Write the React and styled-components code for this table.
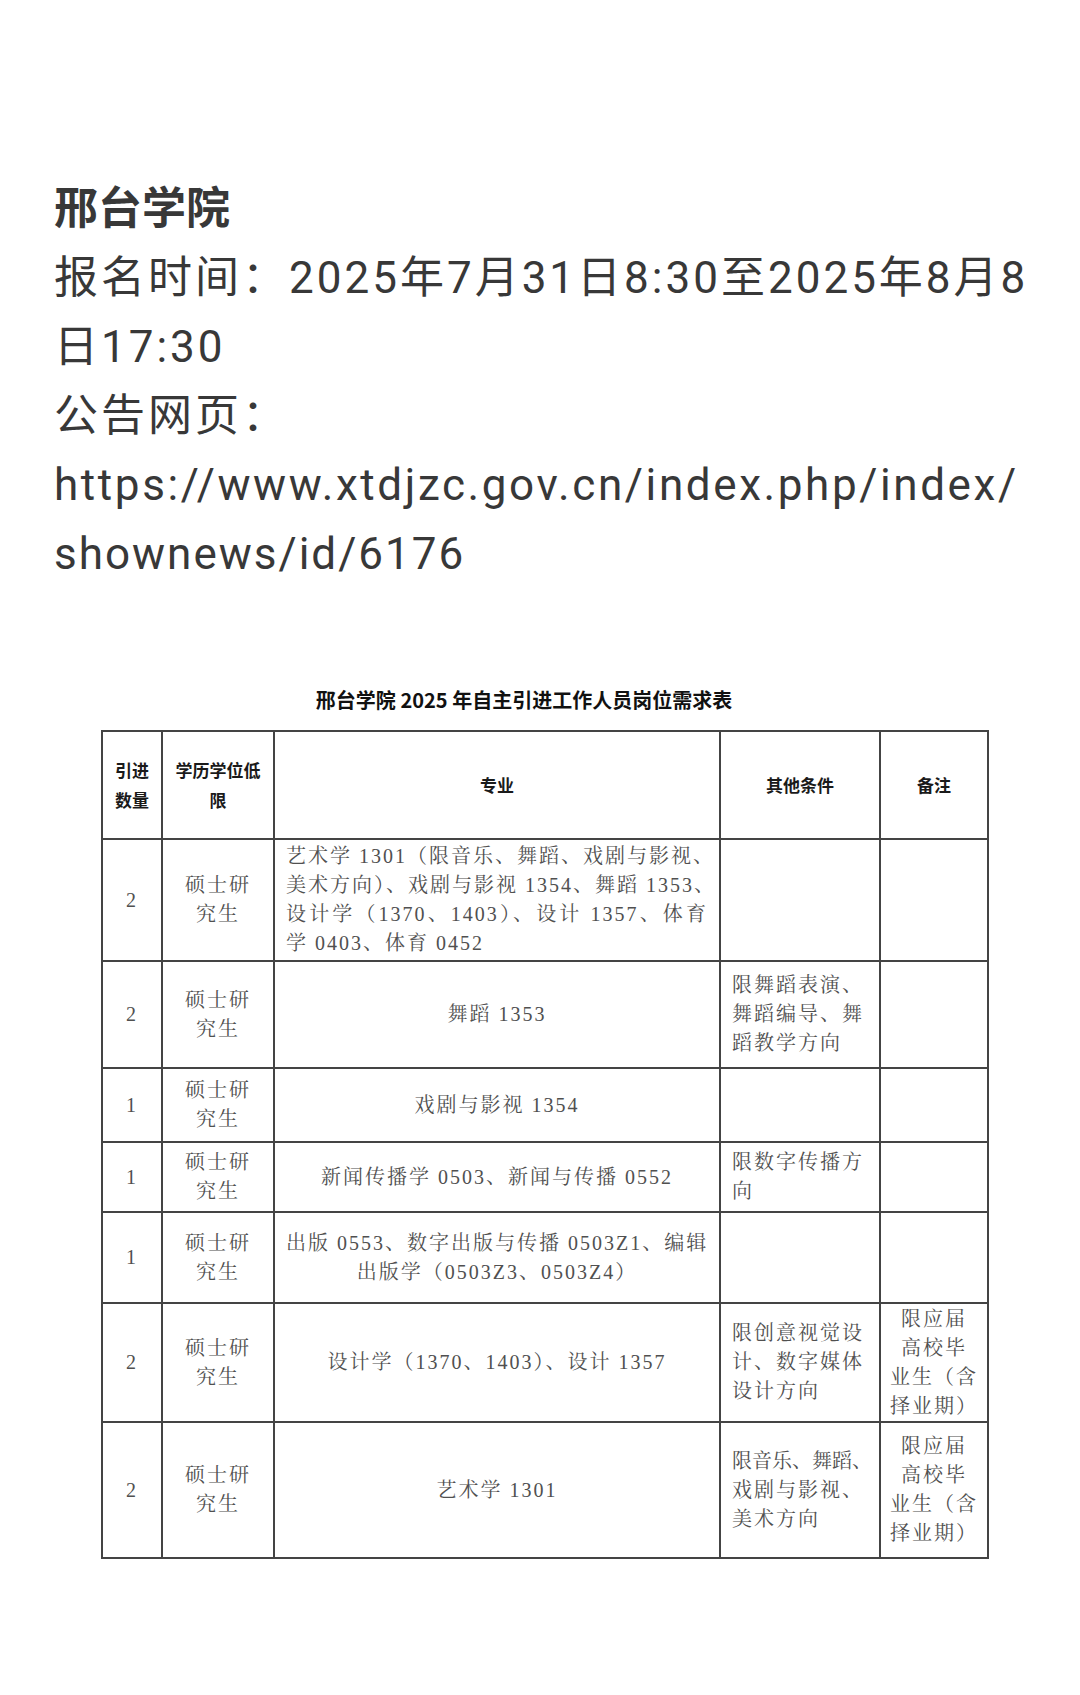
import styled, { createGlobalStyle } from 'styled-components';

// Rows of the document table
const rows = [
  {
    h: 122,
    count: '2',
    major: [
      { t: '艺术学 1301（限音乐、舞蹈、戏剧与影视、', full: true },
      { t: '美术方向）、戏剧与影视 1354、舞蹈 1353、', full: true },
      { t: '设计学（1370、1403）、设计 1357、体育', full: true },
      { t: '学 0403、体育 0452' },
    ],
    majorAlign: 'left',
    other: [],
    note: [],
  },
  {
    h: 107,
    count: '2',
    major: [{ t: '舞蹈 1353' }],
    other: [{ t: '限舞蹈表演、' }, { t: '舞蹈编导、舞' }, { t: '蹈教学方向' }],
    note: [],
  },
  {
    h: 74,
    count: '1',
    major: [{ t: '戏剧与影视 1354' }],
    other: [],
    note: [],
  },
  {
    h: 70,
    count: '1',
    major: [{ t: '新闻传播学 0503、新闻与传播 0552' }],
    other: [{ t: '限数字传播方' }, { t: '向' }],
    note: [],
  },
  {
    h: 91,
    count: '1',
    major: [{ t: '出版 0553、数字出版与传播 0503Z1、编辑' }, { t: '出版学（0503Z3、0503Z4）' }],
    other: [],
    note: [],
  },
  {
    h: 119,
    count: '2',
    major: [{ t: '设计学（1370、1403）、设计 1357' }],
    other: [{ t: '限创意视觉设' }, { t: '计、数字媒体' }, { t: '设计方向' }],
    note: [{ t: '限应届' }, { t: '高校毕' }, { t: '业生（含' }, { t: '择业期）' }],
  },
  {
    h: 136,
    count: '2',
    major: [{ t: '艺术学 1301' }],
    other: [{ t: '限音乐、舞蹈、', tight: true }, { t: '戏剧与影视、' }, { t: '美术方向' }],
    note: [{ t: '限应届' }, { t: '高校毕' }, { t: '业生（含' }, { t: '择业期）' }],
  },
];

function Lines({ items }) {
  return items.map((item, i) => (
    <Line key={i} $full={item.full} $tight={item.tight}>
      {item.t}
    </Line>
  ));
}

function App() {
  return (
    <>
      <GlobalStyle />
      <Page>
        <Intro>
          <Heading>邢台学院</Heading>
          <Para>
            报名时间：2025年7月31日8:30至2025年8月8
            <br />
            日17:30
          </Para>
          <Para>公告网页：</Para>
          <Para $ls={2.6}>
            https://www.xtdjzc.gov.cn/index.php/index/
            <br />
            <Tail>shownews/id/6176</Tail>
          </Para>
        </Intro>

        <Figure>
          <DocTitle>邢台学院 2025 年自主引进工作人员岗位需求表</DocTitle>
          <Table>
            <colgroup>
              <col style={{ width: 60 }} />
              <col style={{ width: 112 }} />
              <col style={{ width: 446 }} />
              <col style={{ width: 160 }} />
              <col style={{ width: 108 }} />
            </colgroup>
            <thead>
              <Row $h={108}>
                <Th>
                  引进
                  <br />
                  数量
                </Th>
                <Th>
                  学历学位低
                  <br />
                  限
                </Th>
                <Th>专业</Th>
                <Th>其他条件</Th>
                <Th>备注</Th>
              </Row>
            </thead>
            <tbody>
              {rows.map((row, i) => (
                <Row key={i} $h={row.h}>
                  <Td $align="center">{row.count}</Td>
                  <Td $align="center">
                    <Line>硕士研</Line>
                    <Line>究生</Line>
                  </Td>
                  <Td $align={row.majorAlign || 'center'}>
                    <Lines items={row.major} />
                  </Td>
                  <Td $align="left">
                    <Lines items={row.other} />
                  </Td>
                  <Td $align="center" $pad={4}>
                    <Lines items={row.note} />
                  </Td>
                </Row>
              ))}
            </tbody>
          </Table>
        </Figure>
      </Page>
    </>
  );
}

const GlobalStyle = createGlobalStyle`
  * {
    margin: 0;
    padding: 0;
    box-sizing: border-box;
  }

  body {
    background-color: #ffffff;
    font-family: 'Noto Sans CJK SC', sans-serif;
  }
`;

const Page = styled.div`
  width: 1080px;
  min-height: 1695px;
  padding-top: 175px;
  background-color: #ffffff;
`;

const Intro = styled.div`
  padding: 0 54px;
  font-family: Roboto, 'Noto Sans CJK SC', sans-serif;
  font-size: 44px;
  line-height: 69px;
  letter-spacing: 3px;
  color: #383838;
  white-space: nowrap;
`;

const Heading = styled.div`
  font-weight: 700;
  letter-spacing: 0;
`;

const Para = styled.div`
  ${({ $ls }) => $ls != null && `letter-spacing: ${$ls}px;`}
`;

const Tail = styled.span`
  letter-spacing: 2px;
`;

const Figure = styled.div`
  margin-top: 96px;
  padding-left: 101px;
`;

const DocTitle = styled.div`
  width: 886px;
  padding-right: 40px;
  margin-bottom: 15px;
  text-align: center;
  font-family: 'Noto Sans CJK SC', sans-serif;
  font-size: 20px;
  font-weight: 700;
  line-height: 30px;
  color: #111111;
`;

const Table = styled.table`
  width: 886px;
  table-layout: fixed;
  border-collapse: collapse;
  border: 2px solid #444444;
`;

const Row = styled.tr`
  height: ${({ $h }) => $h}px;
`;

const Th = styled.th`
  border: 2px solid #444444;
  padding: 0 4px;
  vertical-align: middle;
  text-align: center;
  font-family: 'Noto Sans CJK SC', sans-serif;
  font-size: 17px;
  font-weight: 700;
  line-height: 30px;
  color: #1a1a1a;
`;

const Td = styled.td`
  border: 2px solid #444444;
  padding: 0 ${({ $pad }) => ($pad != null ? $pad : 11)}px;
  vertical-align: middle;
  text-align: ${({ $align }) => $align};
  font-family: 'Liberation Serif', 'Noto Serif CJK SC', 'Noto Sans CJK SC', serif;
  font-size: 20px;
  line-height: 29px;
  letter-spacing: 2px;
  color: #505050;
`;

const Line = styled.span`
  display: block;
  white-space: nowrap;
  ${({ $full }) => $full && 'text-align: justify; text-align-last: justify;'}
  ${({ $tight }) => $tight && 'letter-spacing: 0;'}
`;

export default App;
